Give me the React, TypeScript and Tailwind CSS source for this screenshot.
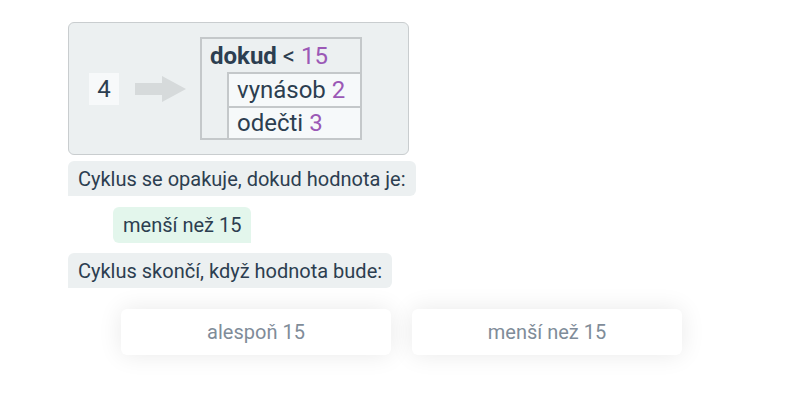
export default function App() {
  const font = { fontFamily: 'Roboto, "Liberation Sans", sans-serif' };
  return (
    <div className="min-h-[400px] w-[800px] bg-white pl-[68px] pt-[22px] text-[#2c3e50]" style={font}>
      <div className="flex h-[133px] w-[341px] items-center rounded-md border border-[#c9cdcf] bg-[#ecf0f1] pl-5">
        <div className="flex h-[32px] w-[30px] items-center justify-center bg-[#f7f9fa] text-[24px]">4</div>
        <svg className="ml-4" width="51" height="26" viewBox="0 0 51 26">
          <path d="M0 7 H27 V0 L51 13 L27 26 V19 H0 Z" fill="#d6dadb" />
        </svg>
        <div className="ml-[14px] w-[162px] border-2 border-[#c4c8ca]">
          <div className="flex h-[33px] items-center pl-2 text-[24px]">
            <span className="font-bold">dokud</span>
            <span className="ml-[6px]">&lt;</span>
            <span className="ml-[6px] text-[#9b59b6]">15</span>
          </div>
          <div className="ml-[25px] border-l-2 border-t-2 border-[#c4c8ca] bg-[#f6f9fa]">
            <div className="flex h-[32px] items-center pl-2 text-[24px]">
              vynásob <span className="ml-[6px] text-[#9b59b6]">2</span>
            </div>
            <div className="flex h-[32px] items-center border-t-2 border-[#c4c8ca] pl-2 text-[24px]">
              odečti <span className="ml-[6px] text-[#9b59b6]">3</span>
            </div>
          </div>
        </div>
      </div>

      <div className="mt-[6px] flex h-[35px] w-fit items-center whitespace-nowrap rounded-md rounded-bl-none bg-[#ecf0f1] px-[10px] text-[20px]">
        Cyklus se opakuje, dokud hodnota je:
      </div>

      <div className="ml-[45px] mt-[11px] flex h-[36px] w-fit items-center whitespace-nowrap rounded-md rounded-br-none bg-[#e3f6ec] px-[10px] text-[20px]">
        menší než 15
      </div>

      <div className="mt-[10px] flex h-[35px] w-fit items-center whitespace-nowrap rounded-md rounded-bl-none bg-[#ecf0f1] px-[10px] text-[20px]">
        Cyklus skončí, když hodnota bude:
      </div>

      <div className="ml-[53px] mt-[21px] flex gap-[21px]">
        <button className="h-[46px] w-[270px] rounded-md bg-white text-[20px] text-[#7f8c99] shadow-[0_0_24px_rgba(0,0,0,0.09)]">
          alespoň 15
        </button>
        <button className="h-[46px] w-[270px] rounded-md bg-white text-[20px] text-[#7f8c99] shadow-[0_0_24px_rgba(0,0,0,0.09)]">
          menší než 15
        </button>
      </div>
    </div>
  );
}
